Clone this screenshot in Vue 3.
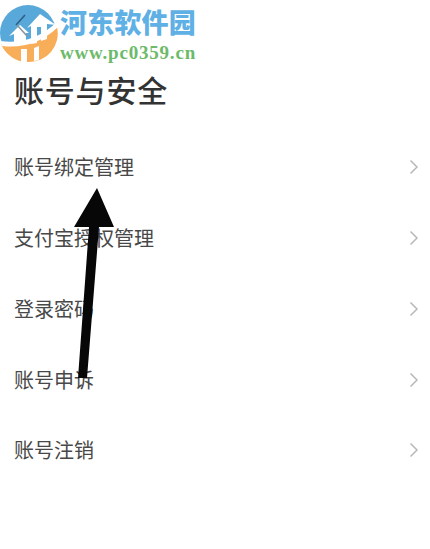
<script setup>
const rows = ['账号绑定管理', '支付宝授权管理', '登录密码', '账号申诉', '账号注销']
</script>

<template>
  <div class="page">
    <h1 class="title">账号与安全</h1>
    <ul class="list">
      <li v-for="r in rows" :key="r" class="row">
        <span class="label">{{ r }}</span>
        <svg class="chev" width="10" height="16" viewBox="0 0 10 16">
          <path d="M1.5 1.5 L8 8 L1.5 14.5" fill="none" stroke="#b8b8b8" stroke-width="1.5" />
        </svg>
      </li>
    </ul>

    <div class="mark">
      <svg class="logo" width="58" height="64" viewBox="0 0 58 64">
        <circle cx="28" cy="33" r="28" fill="#58a8da" />
        <path d="M1 44 Q34 50 57 27 A28.5 28.5 0 0 1 28 62 A29 29 0 0 1 1 44 Z" fill="#f8ad58" />
        <path d="M0 41 Q32 46 58 21 L58 27 Q34 50 2 46 Z" fill="#fff" />
        <path d="M40 14 L56 25 L47 24 L47 39 L41 41 L41 27 L37 27 L37 43 L31 44 L31 26 L27 28 Z" fill="#fff" />
        <path d="M20 25 L29 33 L26 33 L26 43 L14 43 L14 34 L9 36 Z" fill="#fff" />
        <path d="M21 49 L27 49 L27 62 L21 62 Z" fill="#fff" />
        <path d="M34 48 L39 46 L39 60 L34 61 Z" fill="#fff" />
        <path d="M25 15 L16 25" stroke="#2f5f85" stroke-width="1.6" fill="none" />
        <path d="M17 25 L27 36" stroke="#8a959d" stroke-width="1.6" fill="none" />
      </svg>
      <div class="brand">
        <div class="cn">河东软件园</div>
        <div class="url">www.pc0359.cn</div>
      </div>
    </div>

    <svg class="arrow" width="60" height="195" viewBox="0 0 60 195">
      <path d="M36 1 L53 40 L38 40 L26 191 L17 191 L28 40 L13 40 Z" fill="#070707" />
    </svg>
  </div>
</template>

<style>
html, body { background: #fff; }
</style>

<style scoped>
.page {
  position: relative;
  width: 430px;
  height: 549px;
  overflow: hidden;
  background: #fff;
  font-family: "Noto Sans CJK SC", "Noto Sans", sans-serif;
  color: #333;
}
.title {
  margin: 0;
  padding: 68px 0 0 14px;
  font-size: 30px;
  line-height: 42px;
  font-weight: 500;
  letter-spacing: 0.8px;
  color: #333;
}
.list {
  list-style: none;
  margin: 0;
  padding: 22px 0 0 0;
}
.row {
  display: flex;
  align-items: center;
  justify-content: space-between;
  height: 70.75px;
  padding: 0 11px 0 14px;
}
.label {
  font-size: 20px;
  line-height: 28px;
  color: #484848;
}
.chev { display: block; }
.mark {
  position: absolute;
  left: 0;
  top: 0;
  display: flex;
  gap: 2px;
}
.logo { display: block; }
.brand {
  display: flex;
  flex-direction: column;
  align-items: flex-start;
  padding-top: 5px;
}
.cn {
  font-size: 27px;
  line-height: 34px;
  font-weight: 900;
  letter-spacing: 0.2px;
  color: #5fb0e4;
}
.url {
  margin-top: 3px;
  font-family: "Liberation Serif", serif;
  font-size: 19px;
  line-height: 22px;
  font-weight: 700;
  letter-spacing: 0.8px;
  color: #6cba6a;
}
.arrow {
  position: absolute;
  left: 61px;
  top: 187px;
}
</style>
